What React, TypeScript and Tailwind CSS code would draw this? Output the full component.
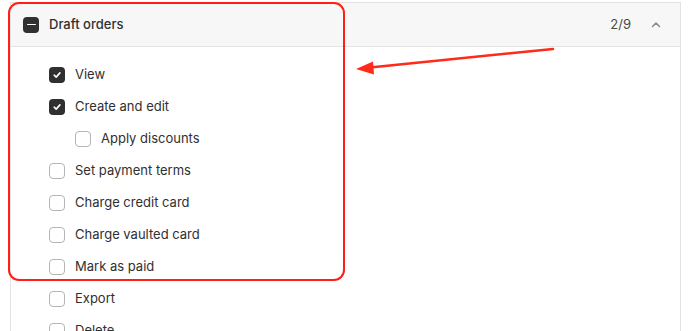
import React from "react";

function Box({ checked }: { checked?: boolean }) {
  if (checked) {
    return (
      <span className="flex h-4 w-4 shrink-0 items-center justify-center rounded-[4px] bg-[#303030]">
        <svg width="10" height="10" viewBox="0 0 10 10" fill="none">
          <path d="M2.2 5.2 L4.2 7.1 L7.9 2.9" stroke="white" strokeWidth="1.6" strokeLinecap="round" strokeLinejoin="round" />
        </svg>
      </span>
    );
  }
  return <span className="h-4 w-4 shrink-0 rounded-[4px] border border-[#b5b5b5] bg-white" />;
}

const rows: { label: string; checked?: boolean; indent?: boolean }[] = [
  { label: "View", checked: true },
  { label: "Create and edit", checked: true },
  { label: "Apply discounts", indent: true },
  { label: "Set payment terms" },
  { label: "Charge credit card" },
  { label: "Charge vaulted card" },
  { label: "Mark as paid" },
  { label: "Export" },
  { label: "Delete" },
];

export default function App() {
  return (
    <div
      className="relative h-[331px] w-[688px] overflow-hidden bg-white text-[13px] text-[#303030]"
      style={{ fontFamily: "Inter, 'Noto Sans', sans-serif" }}
    >
      <div className="ml-[10px] mt-[2px] w-[671px] border-x border-t border-[#e3e3e3]">
        <div className="flex h-[44px] items-center border-b border-[#e3e3e3] bg-[#f7f7f7] pl-[12px] pr-[18px]">
          <span className="flex h-4 w-4 items-center justify-center rounded-[4px] bg-[#303030]">
            <span className="h-[1.5px] w-[9px] rounded bg-white" />
          </span>
          <span className="ml-[10px] font-[550]">Draft orders</span>
          <span className="ml-auto text-[#4a4a4a]">2/9</span>
          <svg className="ml-[19px]" width="12" height="12" viewBox="0 0 12 12" fill="none">
            <path d="M2.5 7.5 L6 4 L9.5 7.5" stroke="#8a8a8a" strokeWidth="1.5" strokeLinecap="round" strokeLinejoin="round" />
          </svg>
        </div>
        <div className="flex flex-col pl-[38px] pt-[12px]">
          {rows.map((r) => (
            <div key={r.label} className={`flex h-[32px] items-center gap-[10px] ${r.indent ? "pl-[26px]" : ""}`}>
              <Box checked={r.checked} />
              <span>{r.label}</span>
            </div>
          ))}
        </div>
      </div>

      <div className="pointer-events-none absolute left-[8px] top-[2px] h-[279px] w-[337px] rounded-[11px] border-2 border-[#ff1f14]" />

      <svg className="pointer-events-none absolute left-0 top-0" width="688" height="331" viewBox="0 0 688 331">
        <line x1="553" y1="49" x2="370" y2="67.5" stroke="#ff2a1a" strokeWidth="2.5" strokeLinecap="round" />
        <polygon points="356,69 373,61.5 374,74.5" fill="#ff2a1a" />
      </svg>
    </div>
  );
}
